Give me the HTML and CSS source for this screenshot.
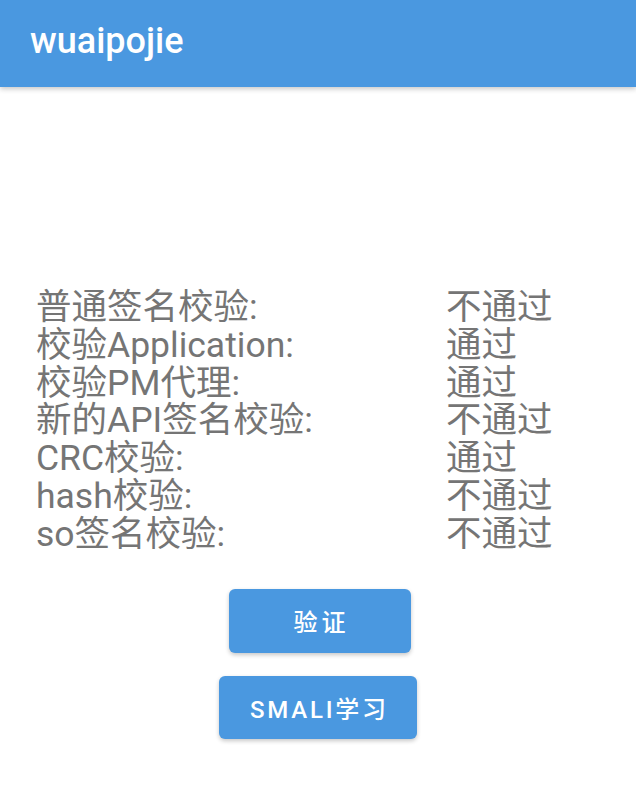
FILE: index.html
```html
<!DOCTYPE html>
<html lang="zh">
<head>
<meta charset="utf-8">
<link rel="stylesheet" href="styles.css">
</head>
<body>
<header class="toolbar"><h1 class="title">wuaipojie</h1></header>
<main class="content">
  <div class="checks">
    <span>普通签名校验:</span><span>不通过</span>
    <span>校验Application:</span><span>通过</span>
    <span>校验PM代理:</span><span>通过</span>
    <span>新的API签名校验:</span><span>不通过</span>
    <span>CRC校验:</span><span>通过</span>
    <span>hash校验:</span><span>不通过</span>
    <span>so签名校验:</span><span>不通过</span>
  </div>
  <div class="actions">
    <button class="btn btn-verify">验证</button>
    <button class="btn btn-smali">SMALI学习</button>
  </div>
</main>
</body>
</html>
```
FILE: styles.css
```css
html, body {
  margin: 0;
  padding: 0;
  background: #ffffff;
  width: 636px;
  height: 810px;
  overflow: hidden;
  font-family: Roboto, "Noto Sans CJK SC", sans-serif;
}
.toolbar {
  height: 87px;
  background: #4a98e0;
  box-shadow: 0 2px 5px rgba(0,0,0,0.22);
  display: flex;
  align-items: center;
  padding-left: 30px;
  position: relative;
  z-index: 1;
}
.title {
  margin: 0;
  color: #ffffff;
  font-size: 36px;
  font-weight: 500;
  line-height: 1;
  margin-top: -5px;
}
.content {
  display: flex;
  flex-direction: column;
}
.checks {
  display: grid;
  grid-template-columns: 410px auto;
  padding-left: 36px;
  margin-top: 202px;
  font-size: 35.5px;
  line-height: 37.8px;
  color: #757575;
}
.checks span {
  white-space: nowrap;
}
.actions {
  display: flex;
  flex-direction: column;
  align-items: center;
  gap: 23px;
  margin-top: 35px;
}
.btn {
  border: none;
  border-radius: 6px;
  background: #4a98e0;
  color: #ffffff;
  font-family: Roboto, "Noto Sans CJK SC", sans-serif;
  font-weight: 500;
  font-size: 24px;
  height: 64px;
  box-shadow: 0 2px 4px rgba(0,0,0,0.22);
  padding: 0;
}
.btn-verify {
  width: 182px;
  margin-left: 3px;
  letter-spacing: 4px;
  text-indent: 4px;
}
.btn-smali {
  width: 198px;
  height: 63px;
  letter-spacing: 2.8px;
  text-indent: 2.8px;
}
```
